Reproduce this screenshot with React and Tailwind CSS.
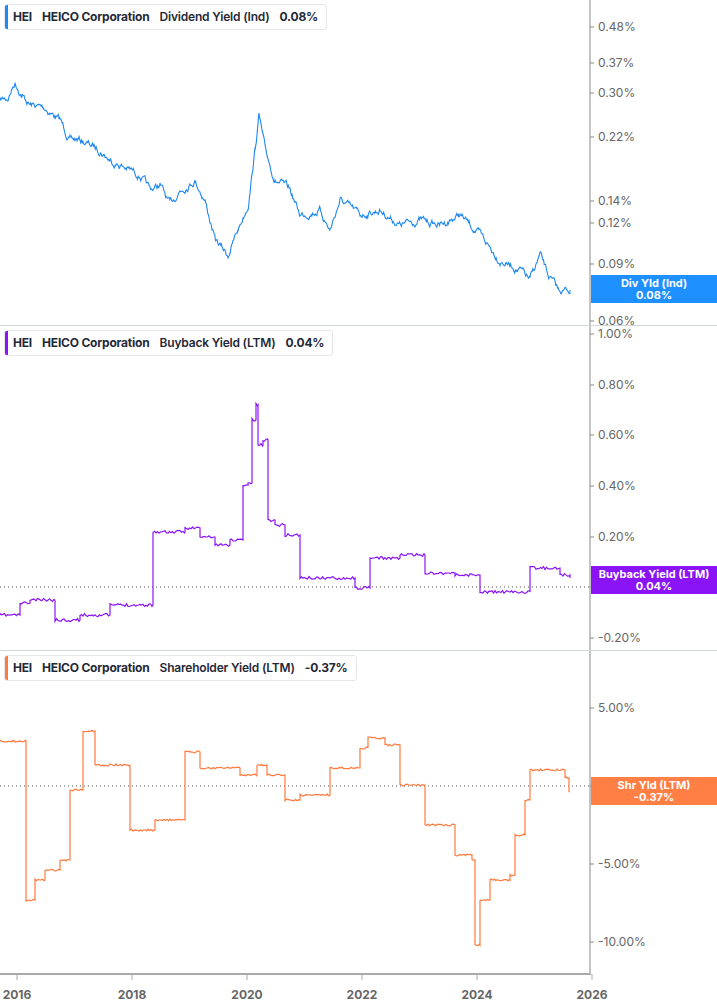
import React from "react";

function rng(seed){let s=seed;return()=>{s=(s*16807)%2147483647;return s/2147483647;};}
function build(anchors, noise, seed, step){
  const r=rng(seed);const pts=[];let w=0;
  for(let i=0;i<anchors.length-1;i++){
    const [x0,y0]=anchors[i],[x1,y1]=anchors[i+1];
    if(step){pts.push([x0,y0]);
      for(let x=x0;x<x1;x+=1.5){pts.push([x,y0+(r()-0.5)*noise]);}
      pts.push([x1,y0]);
    } else {
      for(let x=x0;x<x1;x+=0.7){const t=(x-x0)/(x1-x0);w=w*0.8+(r()-0.5)*noise;pts.push([x,y0+(y1-y0)*t+w]);}
    }
  }
  const l=anchors[anchors.length-1];pts.push(l);
  return pts.map(p=>p[0].toFixed(1)+","+p[1].toFixed(1)).join(" ");
}

const divA=[[0,100],[8,98],[15,82],[22,95],[30,105],[45,108],[60,120],[70,140],[80,140],[100,150],[110,160],[120,165],[140,175],[150,190],[160,185],[170,205],[180,190],[195,180],[205,200],[215,240],[228,255],[238,230],[248,205],[255,150],[259,115],[265,150],[275,180],[290,190],[300,215],[320,210],[330,230],[340,200],[360,215],[380,210],[400,225],[420,220],[440,225],[460,215],[480,235],[500,260],[520,270],[530,280],[540,255],[548,275],[558,290],[570,290]];
const bbA=[[0,615],[20,603],[30,600],[55,620],[80,615],[110,605],[153,532],[185,528],[200,537],[215,545],[230,540],[243,485],[248,483],[252,420],[256,405],[258,445],[263,440],[268,520],[275,525],[285,535],[300,578],[355,588],[370,558],[400,555],[425,573],[455,575],[480,592],[530,568],[560,575],[570,578]];
const shA=[[0,741],[12,741],[26,900],[35,880],[45,870],[60,860],[70,790],[83,731],[95,765],[130,830],[155,820],[185,752],[200,768],[240,775],[257,765],[267,775],[285,800],[300,795],[330,768],[360,748],[368,738],[385,745],[400,785],[425,825],[455,855],[472,860],[475,945],[480,900],[490,880],[510,875],[515,835],[525,800],[530,770],[565,778],[569,792],[570,792]];

function Legend({color,label,val}){
  return(<div className="absolute left-[4px] top-[4px] h-[26px] flex items-center gap-[10px] bg-white border border-gray-200 rounded-[3px] pl-[8px] pr-[8px] text-[12px] font-bold text-[#1f2937] overflow-hidden tracking-[-0.2px]" style={{fontFamily:"Inter, sans-serif"}}>
    <div className="absolute left-0 top-0 bottom-0 w-[3px]" style={{background:color}}/>
    <span>HEI</span><span>HEICO Corporation</span><span className="font-semibold">{label}</span><span>{val}</span>
  </div>);
}

const T=({t,y})=>(<g><line x1="590" x2="594" y1={y} y2={y} stroke="#888"/><text x="598" y={y+4} fontSize="12" fill="#666">{t}</text></g>);

export default function App(){
  const div=build(divA,5,7,false), bb=build(bbA,3,11,true), sh=build(shA,2,13,true);
  return(<div className="w-[717px] h-[1005px] bg-white relative overflow-hidden" style={{fontFamily:"Inter, sans-serif"}}>
    <div className="relative border-b border-gray-300 z-10">
      <svg width="717" height="325" className="block overflow-visible">
        <polyline points={div} fill="none" stroke="#1e88f0" strokeWidth="1.1"/>
        <line x1="590" x2="590" y1="0" y2="325" stroke="#888"/>
        {[["0.48%",27],["0.37%",63],["0.30%",93],["0.22%",137],["0.14%",201],["0.12%",223],["0.09%",264],["0.06%",321]].map(([t,y])=>(<T key={t} t={t} y={y}/>))}
        <rect x="591" y="275" width="126" height="28" fill="#1e90ff"/>
        <text x="654" y="287" textAnchor="middle" fontSize="11" fontWeight="700" fill="#fff">Div Yld (Ind)</text>
        <text x="654" y="299" textAnchor="middle" fontSize="11" fontWeight="700" fill="#fff">0.08%</text>
      </svg>
      <Legend color="#1e88f0" label="Dividend Yield (Ind)" val="0.08%"/>
    </div>
    <div className="relative border-b border-gray-300">
      <svg width="717" height="324" className="block">
        <g transform="translate(0,-326)">
          <line x1="0" x2="590" y1="587" y2="587" stroke="#555" strokeDasharray="1 3"/>
          <polyline points={bb} fill="none" stroke="#8a14f5" strokeWidth="1.2"/>
          {[["1.00%",334],["0.80%",385],["0.60%",435],["0.40%",486],["0.20%",537],["0.00%",587],["-0.20%",638]].map(([t,y])=>(<T key={t} t={t} y={y}/>))}
          <rect x="591" y="566" width="126" height="28" fill="#8a14f5"/>
          <text x="654" y="578" textAnchor="middle" fontSize="11" fontWeight="700" fill="#fff">Buyback Yield (LTM)</text>
          <text x="654" y="590" textAnchor="middle" fontSize="11" fontWeight="700" fill="#fff">0.04%</text>
        </g>
        <line x1="590" x2="590" y1="0" y2="324" stroke="#888"/>
      </svg>
      <Legend color="#8a14f5" label="Buyback Yield (LTM)" val="0.04%"/>
    </div>
    <div className="relative">
      <svg width="717" height="354" className="block">
        <g transform="translate(0,-651)">
          <line x1="0" x2="590" y1="786" y2="786" stroke="#555" strokeDasharray="1 3"/>
          <polyline points={sh} fill="none" stroke="#ff7a3d" strokeWidth="1.2"/>
          {[["5.00%",708],["0.00%",786],["-5.00%",864],["-10.00%",942]].map(([t,y])=>(<T key={t} t={t} y={y}/>))}
          <rect x="591" y="777" width="126" height="28" fill="#ff7f45"/>
          <text x="654" y="789" textAnchor="middle" fontSize="11" fontWeight="700" fill="#fff">Shr Yld (LTM)</text>
          <text x="654" y="801" textAnchor="middle" fontSize="11" fontWeight="700" fill="#fff">-0.37%</text>
          <line x1="590" x2="590" y1="651" y2="974" stroke="#888"/>
          <line x1="0" x2="591" y1="974" y2="974" stroke="#aaa" strokeWidth="2"/>
          {[["2016",17],["2018",132],["2020",247],["2022",362],["2024",477],["2026",592]].map(([t,x])=>(<g key={t}><line x1={x} x2={x} y1="974" y2="980" stroke="#aaa"/><text x={x} y="999" textAnchor="middle" fontSize="12" fontWeight="700" fill="#666">{t}</text></g>))}
        </g>
      </svg>
      <Legend color="#ff7a3d" label="Shareholder Yield (LTM)" val="-0.37%"/>
    </div>
  </div>);
}
